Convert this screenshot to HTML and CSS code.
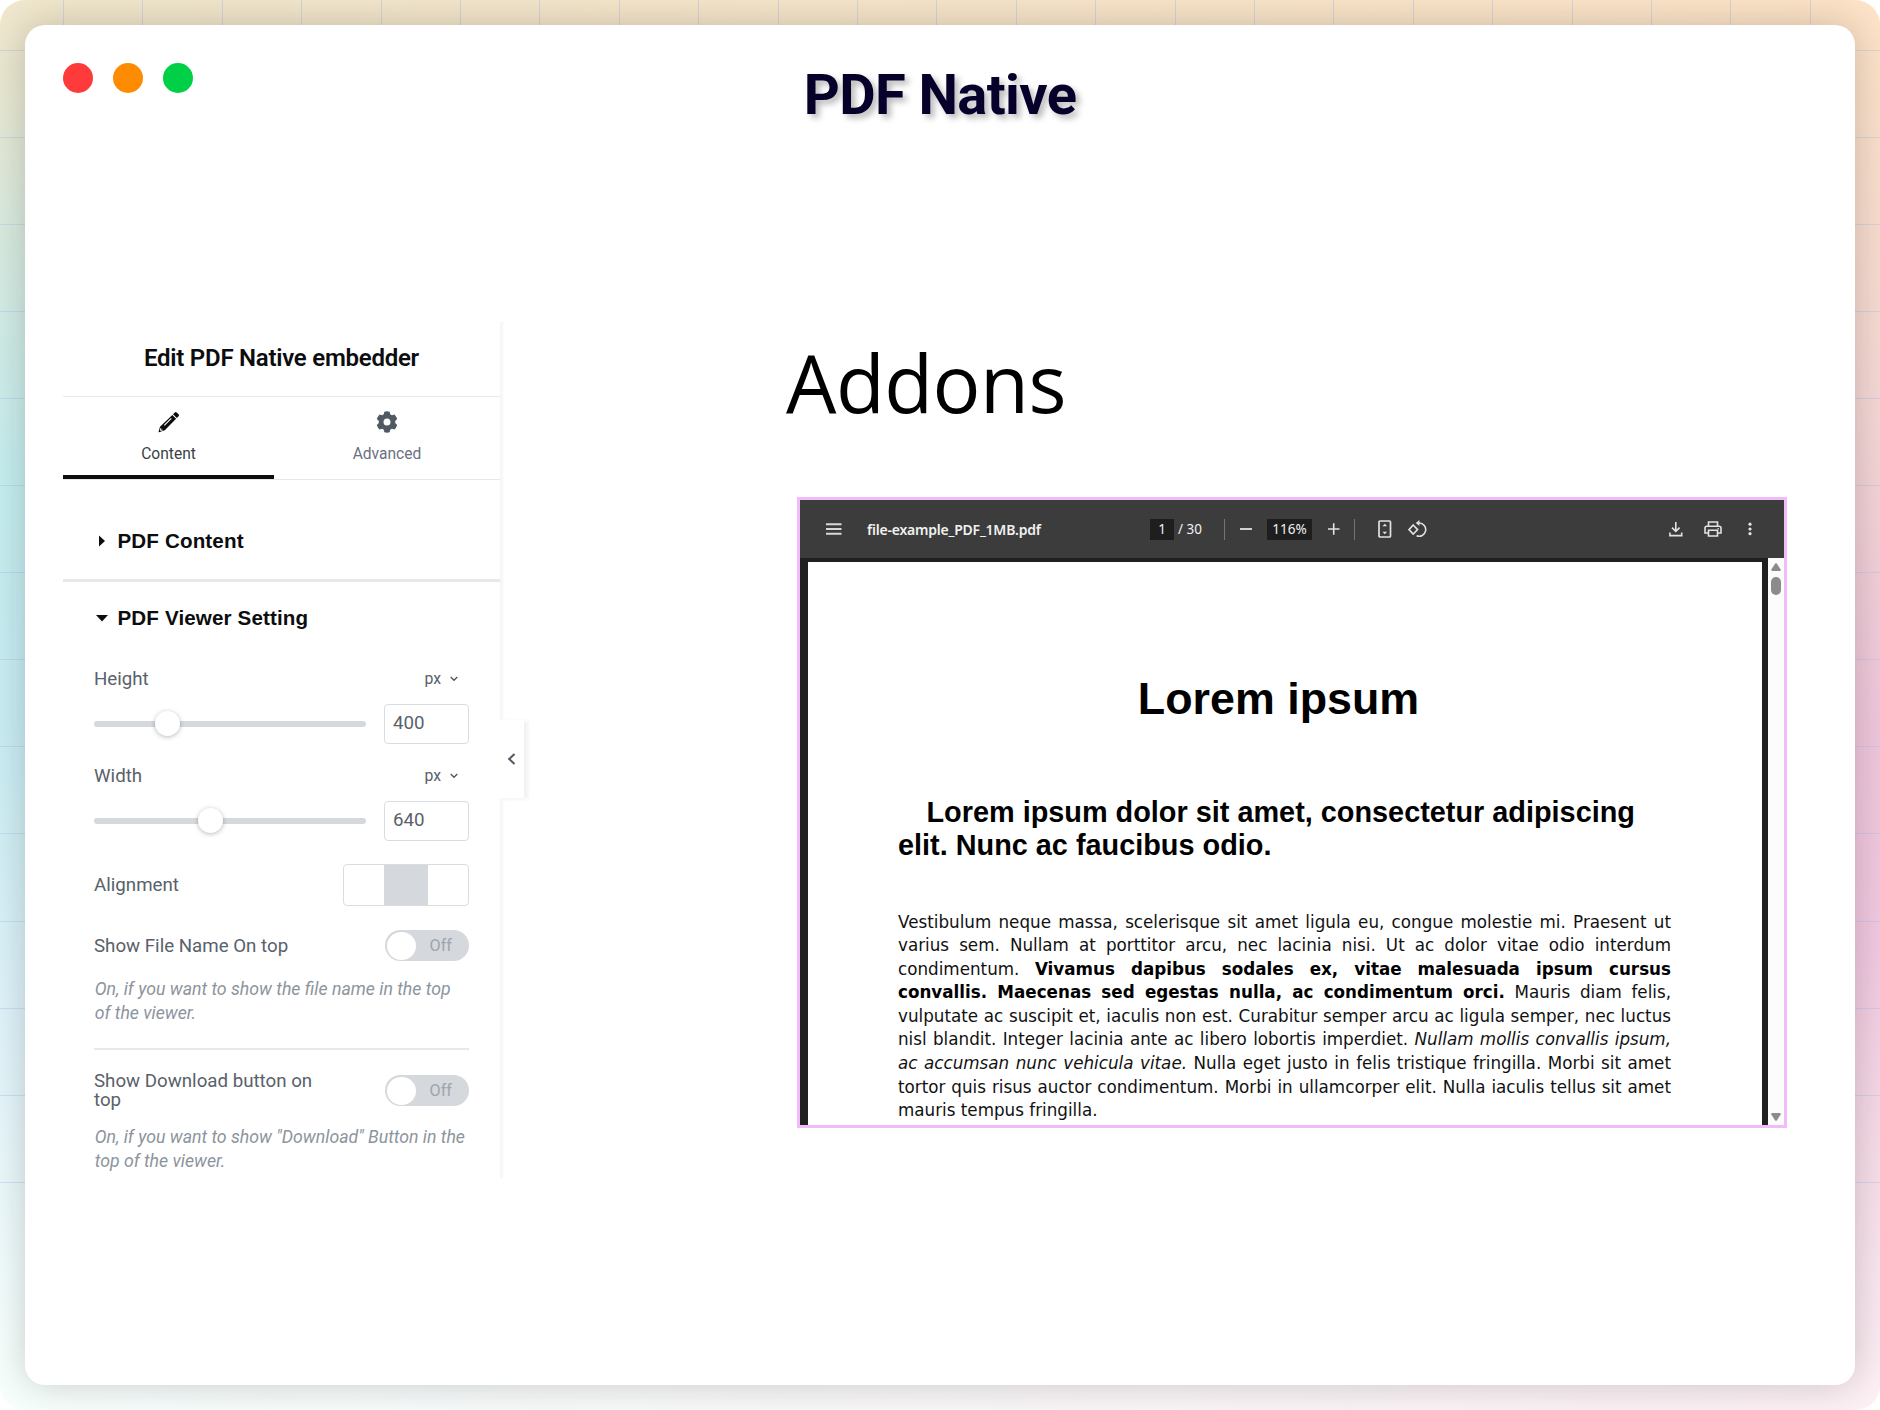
FILE: index.html
```html
<!DOCTYPE html>
<html lang="en">
<head>
<meta charset="utf-8">
<title>PDF Native</title>
<link rel="stylesheet" href="styles.css">
</head>
<body>
<div class="backdrop">
  <div class="window">
    <header class="titlebar">
      <div class="dots"><i class="dot red"></i><i class="dot orange"></i><i class="dot green"></i></div>
      <h1>PDF Native</h1>
    </header>
    <main class="main">
      <aside class="panel">
        <h2 class="panel-title"><span>Edit PDF Native embedder</span></h2>
        <nav class="tabs">
          <div class="tab active">
            <svg width="22" height="22" viewBox="0 0 22 22"><path fill="#0c0d0e" d="M15 3.200 18.800 7 20.600 5.200Q21.500 4.300 20.600 3.300L18.700 1.400Q17.700.500 16.800 1.400ZM14.300 3.900 18.100 7.700 6.800 19.300 1 21.200Q.400 21.300.600 20.700L2 15.800Z"/><path stroke="#fff" stroke-width="1.100" fill="none" d="M6.300 14.300 13.300 7.400M2.700 17.200V19.300H4.600"/></svg>
            <span>Content</span>
          </div>
          <div class="tab">
            <svg width="22" height="22" viewBox="0 0 22 22"><path fill="#515962" fill-rule="evenodd" d="M8.300.700Q11-.100 13.700.700L14.200 3.300 15.900 4.300 18.500 3.400Q20.300 5.400 21.200 8.100L19.200 9.900V12.100L21.200 13.900Q20.300 16.600 18.500 18.600L15.900 17.700 14.200 18.700 13.700 21.300Q11 22.100 8.300 21.300L7.800 18.700 6.100 17.700 3.500 18.600Q1.700 16.600.800 13.900L2.800 12.100V9.900L.800 8.100Q1.700 5.400 3.500 3.400L6.100 4.300 7.800 3.300ZM11 7.500A3.500 3.500 0 1 0 11 14.500 3.500 3.500 0 1 0 11 7.500Z"/></svg>
            <span>Advanced</span>
          </div>
        </nav>
        <div class="section closed">
          <svg class="caret" width="12" height="12" viewBox="0 0 12 12"><path fill="#0c0d0e" d="M3 .500 9 6 3 11.500Z"/></svg>
          <h3>PDF Content</h3>
        </div>
        <div class="section open">
          <svg class="caret" width="12" height="12" viewBox="0 0 12 12"><path fill="#0c0d0e" d="M0 3H12L6 9.500Z"/></svg>
          <h3>PDF Viewer Setting</h3>
        </div>
        <div class="controls">
          <div class="control">
            <div class="label-row"><label>Height</label><span class="unit">px <svg width="8" height="6" viewBox="0 0 8 6"><path d="M.700 1 4 4.300 7.300 1" fill="none" stroke="#515962" stroke-width="1.400"/></svg></span></div>
            <div class="slider-row"><div class="track"><i class="thumb at-400"></i></div><div class="number">400</div></div>
          </div>
          <div class="control">
            <div class="label-row"><label>Width</label><span class="unit">px <svg width="8" height="6" viewBox="0 0 8 6"><path d="M.700 1 4 4.300 7.300 1" fill="none" stroke="#515962" stroke-width="1.400"/></svg></span></div>
            <div class="slider-row"><div class="track"><i class="thumb at-640"></i></div><div class="number">640</div></div>
          </div>
          <div class="row align"><label>Alignment</label><div class="choices"><i></i><i class="on"></i><i></i></div></div>
          <div class="row file"><label>Show File Name On top</label><div class="switch"><i></i><span>Off</span></div></div>
          <p class="hint">On, if you want to show the file name in the top<br>of the viewer.</p>
          <hr>
          <div class="row download"><label>Show Download button on<br>top</label><div class="switch"><i></i><span>Off</span></div></div>
          <p class="hint second">On, if you want to show "Download" Button in the<br>top of the viewer.</p>
        </div>
        <div class="collapse"><svg width="9" height="12" viewBox="0 0 9 12"><path d="M7.500 1 2.200 6 7.500 11" fill="none" stroke="#515962" stroke-width="2"/></svg></div>
      </aside>

      <section class="preview">
        <h2 class="addons">Addons</h2>
        <div class="viewer">
          <div class="toolbar">
            <svg class="menu" width="16" height="12" viewBox="0 0 16 12"><path d="M0 1.200H15.500M0 6H15.500M0 10.700H15.500" stroke="#d8d8d8" stroke-width="1.900"/></svg>
            <span class="filename">file-example_PDF_1MB.pdf</span>
            <span class="box page-no">1</span><span class="total">/ 30</span>
            <i class="sep"></i>
            <svg class="minus" width="12" height="12" viewBox="0 0 12 12"><path d="M0 6H12" stroke="#d8d8d8" stroke-width="1.900"/></svg>
            <span class="box zoom">116%</span>
            <svg class="plus" width="12" height="12" viewBox="0 0 12 12"><path d="M0 6H11.500M5.700.300V11.700" stroke="#e2e2e2" stroke-width="1.600"/></svg>
            <i class="sep second"></i>
            <svg class="fit" width="14" height="18" viewBox="0 0 14 18"><rect x="1" y="1" width="11.500" height="16" rx="1" fill="none" stroke="#e2e2e2" stroke-width="1.700"/><path fill="#e2e2e2" d="M4.500 6.300 6.800 3.800 9.100 6.300ZM4.500 11.700 6.800 14.200 9.100 11.700Z"/></svg>
            <svg class="rotate" width="19" height="18" viewBox="0 0 19 18"><path d="M5.200 5 9.600 9.600 5.200 14.100 1 9.600Z" fill="none" stroke="#e2e2e2" stroke-width="1.600"/><path d="M9 3H11.200A6.600 6.600 0 1 1 8.600 15.700" fill="none" stroke="#e2e2e2" stroke-width="1.600"/><path d="M11.400 0V6L7.800 3Z" fill="#e2e2e2"/></svg>
            <svg class="save" width="14" height="15" viewBox="0 0 14 15"><path d="M6.800 0V9M3 5.600 6.800 9.400 10.600 5.600M.900 10.500V13.600H12.700V10.500" fill="none" stroke="#e2e2e2" stroke-width="1.600"/></svg>
            <svg class="print" width="18" height="16" viewBox="0 0 18 16"><path d="M4.500 5V1H13.500V5M4.500 12H1V7Q1 5.200 2.800 5.200H15.200Q17 5.200 17 7V12H13.500M4.500 9.300H13.500V15H4.500Z" fill="none" stroke="#e2e2e2" stroke-width="1.600"/><circle cx="14.200" cy="7.700" r=".8" fill="#e2e2e2"/></svg>
            <svg class="more" width="4" height="14" viewBox="0 0 4 14"><g fill="#e2e2e2"><circle cx="2" cy="2.200" r="1.600"/><circle cx="2" cy="7" r="1.600"/><circle cx="2" cy="11.700" r="1.600"/></g></svg>
          </div>
          <div class="canvas">
            <article class="page">
              <h1>Lorem ipsum</h1>
              <h2>Lorem ipsum dolor sit amet, consectetur adipiscing<br>elit. Nunc ac faucibus odio.</h2>
              <div class="text">
                <p>Vestibulum neque massa, scelerisque sit amet ligula eu, congue molestie mi. Praesent ut</p>
                <p>varius sem. Nullam at porttitor arcu, nec lacinia nisi. Ut ac dolor vitae odio interdum</p>
                <p>condimentum. <b>Vivamus dapibus sodales ex, vitae malesuada ipsum cursus</b></p>
                <p><b>convallis. Maecenas sed egestas nulla, ac condimentum orci.</b> Mauris diam felis,</p>
                <p>vulputate ac suscipit et, iaculis non est. Curabitur semper arcu ac ligula semper, nec luctus</p>
                <p>nisl blandit. Integer lacinia ante ac libero lobortis imperdiet. <em>Nullam mollis convallis ipsum,</em></p>
                <p><em>ac accumsan nunc vehicula vitae.</em> Nulla eget justo in felis tristique fringilla. Morbi sit amet</p>
                <p>tortor quis risus auctor condimentum. Morbi in ullamcorper elit. Nulla iaculis tellus sit amet</p>
                <p class="last">mauris tempus fringilla.</p>
              </div>
            </article>
            <div class="scrollbar">
              <svg width="10" height="8" viewBox="0 0 10 8"><path fill="#8b8b8b" d="M4.200.600Q5-.200 5.800.600L9.700 6.600Q10 8 8.800 8H1.200Q0 8 .300 6.600Z"/></svg>
              <i class="handle"></i>
              <svg class="down" width="10" height="8" viewBox="0 0 10 8"><path fill="#8b8b8b" d="M4.200 7.400Q5 8.200 5.800 7.400L9.700 1.400Q10 0 8.800 0H1.200Q0 0 .300 1.400Z"/></svg>
            </div>
          </div>
        </div>
      </section>
    </main>
  </div>
</div>
</body>
</html>
```

FILE: styles.css
```css
* { box-sizing: border-box; }
body { margin: 0; background: #fff; font-family: Roboto, sans-serif; }
h1, h2, h3, p { margin: 0; }
svg { display: block; flex: none; }
i { font-style: normal; }

.backdrop {
  width: 1880px; height: 1410px; padding: 25px; border-radius: 25px; overflow: hidden;
  background:
    repeating-linear-gradient(90deg, rgba(165,185,235,.4) 0 1px, transparent 1px 79.4px) 63px 0 / 1817px 1184px no-repeat,
    repeating-linear-gradient(180deg, rgba(165,185,235,.36) 0 1px, transparent 1px 87.05px) 0 50px / 100% 1134px no-repeat,
    linear-gradient(180deg, #f0e7cc 0, #e9e8d2 90px, #d9ebe0 230px, #c5eef0 480px, #c8edf3 720px, #dff3fa 1000px, #f7fffd 1350px) 0 0 / 25px 100% no-repeat,
    linear-gradient(180deg, #fde3c7 0, #fae0cb 130px, #f5d8d5 400px, #f0c7dc 720px, #f2c9e1 950px, #f7dde9 1150px, #fdf0f5 1400px) 100% 0 / 25px 100% no-repeat,
    linear-gradient(90deg, #f0e7cc, #fde3c7) 0 0 / 100% 60px no-repeat,
    linear-gradient(90deg, #f7fffd, #fdf0f5);
}
.window {
  height: 1360px; padding: 38px; background: #fff; border-radius: 20px;
  box-shadow: 0 0 38px rgba(0,0,0,.2);
}
.titlebar { display: grid; grid-template-columns: 1fr auto 1fr; height: 64px; }
.dots { display: flex; gap: 20px; }
.dot { width: 30px; height: 30px; border-radius: 50%; }
.red { background: #ff3a3a; }
.orange { background: #ff8b00; }
.green { background: #00d045; }
.titlebar h1 { font-size: 56px; line-height: 64px; font-weight: 700; letter-spacing: -.6px; color: #06002a; text-shadow: 4px 4px 6px rgba(0,0,0,.28); }

.main { display: flex; align-items: flex-start; margin-top: 195px; }
.panel { position: relative; width: 437px; height: 856px; flex: none; color: #59616a; }
.panel::after { content: ""; position: absolute; left: 437px; top: 0; width: 5px; height: 100%; background: linear-gradient(90deg, #f4f4f4, #fff); }
.panel-title { height: 75px; border-bottom: 1px solid #e6e8ea; text-align: center; font-size: 24px; line-height: 73px; font-weight: 600; letter-spacing: -.25px; color: #0c0d0e; }
.tabs { display: flex; height: 83px; border-bottom: 1px solid #e6e8ea; }
.tab { display: flex; flex-direction: column; align-items: center; gap: 12px; flex: 1; padding-top: 14px; font-size: 15.600px; line-height: 19px; color: #69727d; }
.tab.active { flex: none; width: 211px; border-bottom: 4px solid #0c0d0e; color: #3a3f45; }
.section { display: flex; align-items: center; gap: 9.500px; padding-left: 33px; color: #0c0d0e; }
.section h3 { font: bold 20.6px/24px "Liberation Sans", sans-serif; letter-spacing: .13px; }
.closed { height: 102px; padding-top: 22px; border-bottom: 3px solid #e6e8ea; }
.open { height: 72px; }
.controls { padding: 13px 31px 0; font-size: 18.720px; }
.control { height: 97px; }
.label-row { display: flex; justify-content: space-between; line-height: 24px; }
.unit { display: flex; align-items: center; gap: 9px; padding-right: 11px; font-size: 15.800px; }
.slider-row { display: flex; align-items: center; justify-content: space-between; margin-top: 13px; }
.track { position: relative; width: 272px; height: 6px; border-radius: 3px; background: #d5d8dc; }
.thumb { position: absolute; top: -10px; width: 25px; height: 25px; border-radius: 50%; background: #fff; box-shadow: 0 1px 5px rgba(0,0,0,.28); }
.at-400 { left: 60.500px; }
.at-640 { left: 104px; }
.number { width: 85px; height: 40px; padding-left: 8px; border: 1px solid #d9dce0; border-radius: 4px; line-height: 37px; }
.row { display: flex; align-items: center; justify-content: space-between; }
.align { height: 42px; margin-top: 3px; }
.choices { display: flex; width: 126px; height: 42px; border: 1px solid #d9dce0; border-radius: 4px; }
.choices i { flex: 1; }
.choices .on { flex: none; width: 44px; background: #d5d8dc; }
.file { height: 31px; margin-top: 24px; }
.switch { display: flex; align-items: center; width: 84.500px; height: 31px; padding-left: 2px; border-radius: 16px; background: #d5d8dc; color: #9da5ae; font-size: 16.200px; }
.switch i { width: 29px; height: 28px; margin-right: 14px; border-radius: 50%; background: #fff; }
.hint { margin: 16px 0 0 .7px; font-size: 17.700px; line-height: 24px; font-style: italic; color: #8c949d; white-space: nowrap; }
.hint.second { margin-top: 15px; }
.controls hr { height: 2px; margin: 23.400px 0 21px; border: 0; background: #e6e8ea; }
.download label { line-height: 19px; padding-top: 1px; }
.collapse { position: absolute; z-index: 1; left: 437px; top: 398px; width: 24px; height: 78px; display: flex; align-items: center; padding-left: 7px; background: #fff; box-shadow: 4px 1px 4px rgba(0,0,0,.06); }

.preview { margin-left: 286px; }
.addons { margin-top: 10px; font: 400 79.800px/100px "Open Sans", "Noto Sans", sans-serif; letter-spacing: -.5px; color: #000; }
.viewer { width: 990px; height: 631px; margin: 65px 0 0 11px; border: 3px solid #f3bbfc; }
.toolbar { display: flex; align-items: center; height: 58px; background: #3c3c3c; color: #f1f1f1; font: 13.500px/20px "Noto Sans", sans-serif; white-space: nowrap; }
.menu { margin-left: 26px; }
.filename { width: 174px; margin: 2px 109px 0 25px; font-weight: 600; font-size: 14px; letter-spacing: -.22px; }
.box { height: 21px; background: #1e1e1e; text-align: center; }
.page-no { width: 24px; }
.total { width: 27px; margin-left: 4px; }
.sep { width: 1px; height: 21px; margin-left: 19px; background: #747474; }
.minus { margin-left: 15px; }
.zoom { width: 45px; margin-left: 15px; }
.plus { margin-left: 15.500px; }
.sep.second { margin-left: 14.500px; }
.fit { margin-left: 22.500px; }
.rotate { margin-left: 16px; }
.save { margin-left: auto; }
.print { margin-left: 21px; }
.more { margin: 0 32px 0 26px; }
.canvas { display: flex; height: 567px; background: #202020; }
.page { width: 954px; margin: 4px 6px 0 8px; padding: 0 91px 0 90px; background: #fff; color: #000; overflow: hidden; }
.page h1 { margin-top: 111px; padding-right: 12px; text-align: center; font: bold 44.800px/50px "Liberation Sans", sans-serif; }
.page h2 { margin-top: 73px; text-indent: 28.500px; font: bold 28.850px/33.200px "Liberation Sans", sans-serif; white-space: nowrap; }
.text { margin-top: 48.400px; font: 16.750px/23.530px "DejaVu Sans", sans-serif; color: #111; }
.text p { white-space: nowrap; text-align: justify; text-align-last: justify; }
.text b { color: #000; }
.text .last { text-align-last: left; }
.scrollbar { display: flex; flex-direction: column; align-items: center; width: 16px; padding: 5px 0 4px; background: #fcfcfc; }
.handle { width: 10px; height: 18px; margin-top: 6px; border-radius: 5px; background: #8b8b8b; }
.down { margin-top: auto; }
```
